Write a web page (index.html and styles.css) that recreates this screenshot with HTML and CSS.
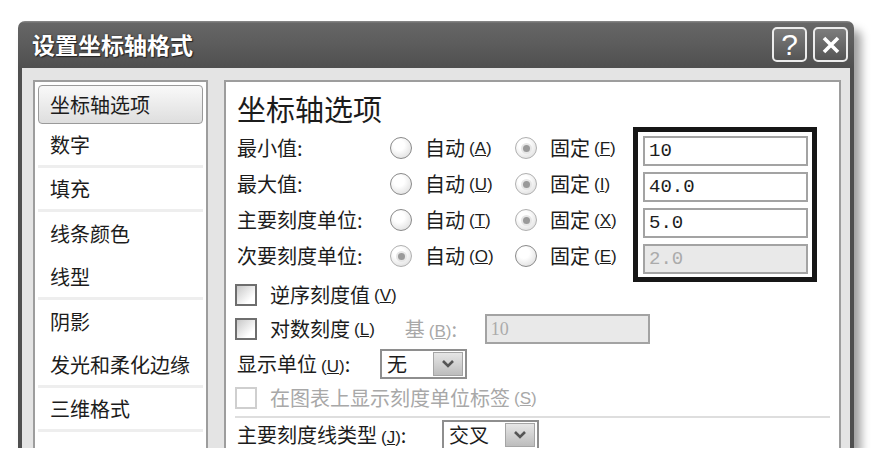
FILE: index.html
```html
<!DOCTYPE html>
<html lang="zh-CN">
<head>
    <meta charset="UTF-8">
    <title>设置坐标轴格式</title>
    <link rel="stylesheet" href="styles.css">
</head>
<body>
    <div class="dialog">
        <div class="titlebar">
            <h1 class="title">设置坐标轴格式</h1>
            <div class="title-buttons">
                <span class="tbtn">?</span>
                <span class="tbtn">
                    <svg width="20" height="20" viewBox="0 0 20 20"><path d="M3 3 L17 17 M17 3 L3 17" stroke="#fff" stroke-width="3.6" fill="none"/></svg>
                </span>
            </div>
        </div>

        <div class="body">
            <ul class="nav">
                <li class="active">坐标轴选项</li>
                <li class="sep">数字</li>
                <li class="sep">填充</li>
                <li>线条颜色</li>
                <li class="sep">线型</li>
                <li>阴影</li>
                <li class="sep">发光和柔化边缘</li>
                <li class="sep">三维格式</li>
                <li></li>
            </ul>

            <div class="panel">
                <h2>坐标轴选项</h2>

                <div class="bounds">
                    <div class="bound-rows">
                        <div class="row">
                            <span class="label">最小值:</span>
                            <span class="opt first"><span class="radio"></span>自动<span class="key">(<u>A</u>)</span></span>
                            <span class="opt"><span class="radio on"></span>固定<span class="key">(<u>F</u>)</span></span>
                        </div>
                        <div class="row">
                            <span class="label">最大值:</span>
                            <span class="opt first"><span class="radio"></span>自动<span class="key">(<u>U</u>)</span></span>
                            <span class="opt"><span class="radio on"></span>固定<span class="key">(<u>I</u>)</span></span>
                        </div>
                        <div class="row">
                            <span class="label">主要刻度单位:</span>
                            <span class="opt first"><span class="radio"></span>自动<span class="key">(<u>T</u>)</span></span>
                            <span class="opt"><span class="radio on"></span>固定<span class="key">(<u>X</u>)</span></span>
                        </div>
                        <div class="row">
                            <span class="label">次要刻度单位:</span>
                            <span class="opt first"><span class="radio on"></span>自动<span class="key">(<u>O</u>)</span></span>
                            <span class="opt"><span class="radio"></span>固定<span class="key">(<u>E</u>)</span></span>
                        </div>
                    </div>
                    <div class="values">
                        <div class="field">10</div>
                        <div class="field">40.0</div>
                        <div class="field">5.0</div>
                        <div class="field disabled">2.0</div>
                    </div>
                </div>

                <div class="options">
                    <div class="line h34">
                        <span class="box"></span>逆序刻度值<span class="key">(<u>V</u>)</span>
                    </div>
                    <div class="line h34">
                        <span class="box"></span>对数刻度<span class="key">(<u>L</u>)</span>
                        <span class="base muted">基<span class="key">(<u>B</u>)</span>:</span>
                        <span class="field disabled base-field">10</span>
                    </div>
                    <div class="line h36">
                        <span class="unit-label">显示单位<span class="key">(<u>U</u>)</span>:</span>
                        <span class="select">无<span class="drop"><svg width="14" height="10" viewBox="0 0 14 10"><path d="M2 2 L7 7 L12 2" stroke="#555" stroke-width="2.6" fill="none"/></svg></span></span>
                    </div>
                    <div class="line h32 muted">
                        <span class="box off"></span>在图表上显示刻度单位标签<span class="key">(<u>S</u>)</span>
                    </div>
                    <div class="rule"></div>
                    <div class="line h32">
                        <span class="tick-label">主要刻度线类型<span class="key">(<u>J</u>)</span>:</span>
                        <span class="select wide">交叉<span class="drop"><svg width="14" height="10" viewBox="0 0 14 10"><path d="M2 2 L7 7 L12 2" stroke="#555" stroke-width="2.6" fill="none"/></svg></span></span>
                    </div>
                </div>
            </div>
        </div>
    </div>
</body>
</html>
```

FILE: styles.css
```css
* {
    margin: 0;
    padding: 0;
    box-sizing: border-box;
}

body {
    background-color: #fff;
    color: #1c1c1c;
    font-family: "Noto Sans CJK SC", "Liberation Sans", sans-serif;
}

.dialog {
    width: 836px;
    height: 427px;
    margin: 21px 0 0 18px;
    border-radius: 7px 7px 0 0;
    overflow: hidden;
    background-color: #e4e4e4;
    box-shadow: 7px 9px 10px rgba(0, 0, 0, 0.38);
    display: flex;
    flex-direction: column;
}

.titlebar {
    height: 47px;
    flex-shrink: 0;
    display: flex;
    align-items: center;
    justify-content: space-between;
    padding: 0 6px 0 14px;
    background: linear-gradient(#8c8c8c 0, #666 5%, #5c5c5c 50%, #4f4f4f 100%);
}

.title {
    font-size: 23px;
    font-weight: bold;
    line-height: 1;
    color: #fff;
    text-shadow: 1px 1px 1px #222, 0 0 2px #333;
}

.title-buttons {
    display: flex;
    gap: 6px;
}

.tbtn {
    width: 35px;
    height: 35px;
    border: 2px solid #ececec;
    border-radius: 5px;
    background: linear-gradient(#7d7d7d, #555);
    color: #fff;
    font: 30px/1 "Liberation Sans", sans-serif;
    display: flex;
    align-items: center;
    justify-content: center;
}

.body {
    flex: 1;
    display: flex;
    gap: 16px;
    padding: 12px 9px 0 11px;
    border-left: 4px solid #4f4f4f;
    border-right: 4px solid #4f4f4f;
}

.nav {
    width: 175px;
    list-style: none;
    background-color: #fff;
    border: 2px solid #9d9d9d;
    border-bottom: none;
    padding: 3px;
}

.nav li {
    height: 44px;
    display: flex;
    align-items: center;
    padding-left: 12px;
    font-size: 20px;
    line-height: 1;
}

.nav li.sep {
    border-bottom: 3px solid #eeeeee;
}

.nav li.active {
    height: 39px;
    border: 1px solid #9a9a9a;
    border-radius: 4px;
    padding-left: 11px;
    background: linear-gradient(#f9f9f9, #dedede);
}

.panel {
    flex: 1;
    background-color: #fff;
    border: 2px solid #9d9d9d;
    border-bottom: none;
    padding-left: 11px;
}

.panel h2 {
    font-size: 29px;
    font-weight: normal;
    line-height: 36px;
    margin: 8px 0 4px;
}

.bounds {
    display: flex;
    height: 144px;
    align-items: flex-start;
}

.bound-rows {
    width: 396px;
}

.row {
    height: 36px;
    display: flex;
    align-items: center;
    font-size: 20px;
    line-height: 1;
}

.label {
    width: 153px;
}

.opt {
    display: flex;
    align-items: center;
}

.opt.first {
    width: 125px;
}

.key {
    font-family: "Liberation Sans", sans-serif;
    font-size: 17px;
    margin-left: 4px;
}

.radio {
    width: 22px;
    height: 22px;
    border-radius: 50%;
    border: 1.5px solid #8a8a8a;
    background: radial-gradient(circle at 40% 35%, #fff 30%, #d6d6d6);
    margin-right: 13px;
    display: flex;
    align-items: center;
    justify-content: center;
}

.radio.on {
    border-color: #b0b0b0;
}

.radio.on::after {
    content: "";
    width: 7px;
    height: 7px;
    border-radius: 50%;
    background-color: #9a9a9a;
    box-shadow: 0 0 0 2px #e6e6e6;
}

.values {
    width: 184px;
    margin-top: -3px;
    border: 5px solid #161616;
    padding: 4px 4px 3px 5px;
    display: flex;
    flex-direction: column;
    gap: 6px;
}

.field {
    height: 30px;
    border: 2px solid #a3a3a3;
    padding-left: 4px;
    font: 19px/26px "Liberation Mono", monospace;
    color: #1c1c1c;
    background-color: #fff;
}

.field.disabled {
    background-color: #e9e9e9;
    color: #ababab;
}

.options {
    margin-top: 4px;
}

.line {
    display: flex;
    align-items: center;
    font-size: 20px;
    line-height: 1;
}

.h32 { height: 32px; }
.h34 { height: 34px; }
.h36 { height: 36px; }

.muted {
    color: #a8a8a8;
}

.box {
    width: 22px;
    height: 22px;
    margin: 0 13px 0 -2px;
    border: 2px solid #6e6e6e;
    background: linear-gradient(135deg, #c8c8c8, #fff 75%);
}

.box.off {
    border-color: #cfcfcf;
    background: #fff;
}

.base {
    margin-left: 30px;
    width: 80px;
}

.base-field {
    width: 165px;
    font-family: "Liberation Serif", serif;
    font-size: 18px;
}

.unit-label {
    width: 143px;
}

.tick-label {
    width: 205px;
}

.select {
    width: 87px;
    height: 30px;
    border: 2px solid #8e8e8e;
    display: flex;
    align-items: center;
    justify-content: space-between;
    padding: 0 2px 0 5px;
    background-color: #fff;
}

.select.wide {
    width: 97px;
}

.drop {
    width: 30px;
    height: 24px;
    border: 1px solid #a5a5a5;
    background: linear-gradient(#e6e6e6, #bdbdbd);
    display: flex;
    align-items: center;
    justify-content: center;
}

.rule {
    height: 2px;
    background-color: #dedede;
    margin: 2px 9px 1px -2px;
}
```
